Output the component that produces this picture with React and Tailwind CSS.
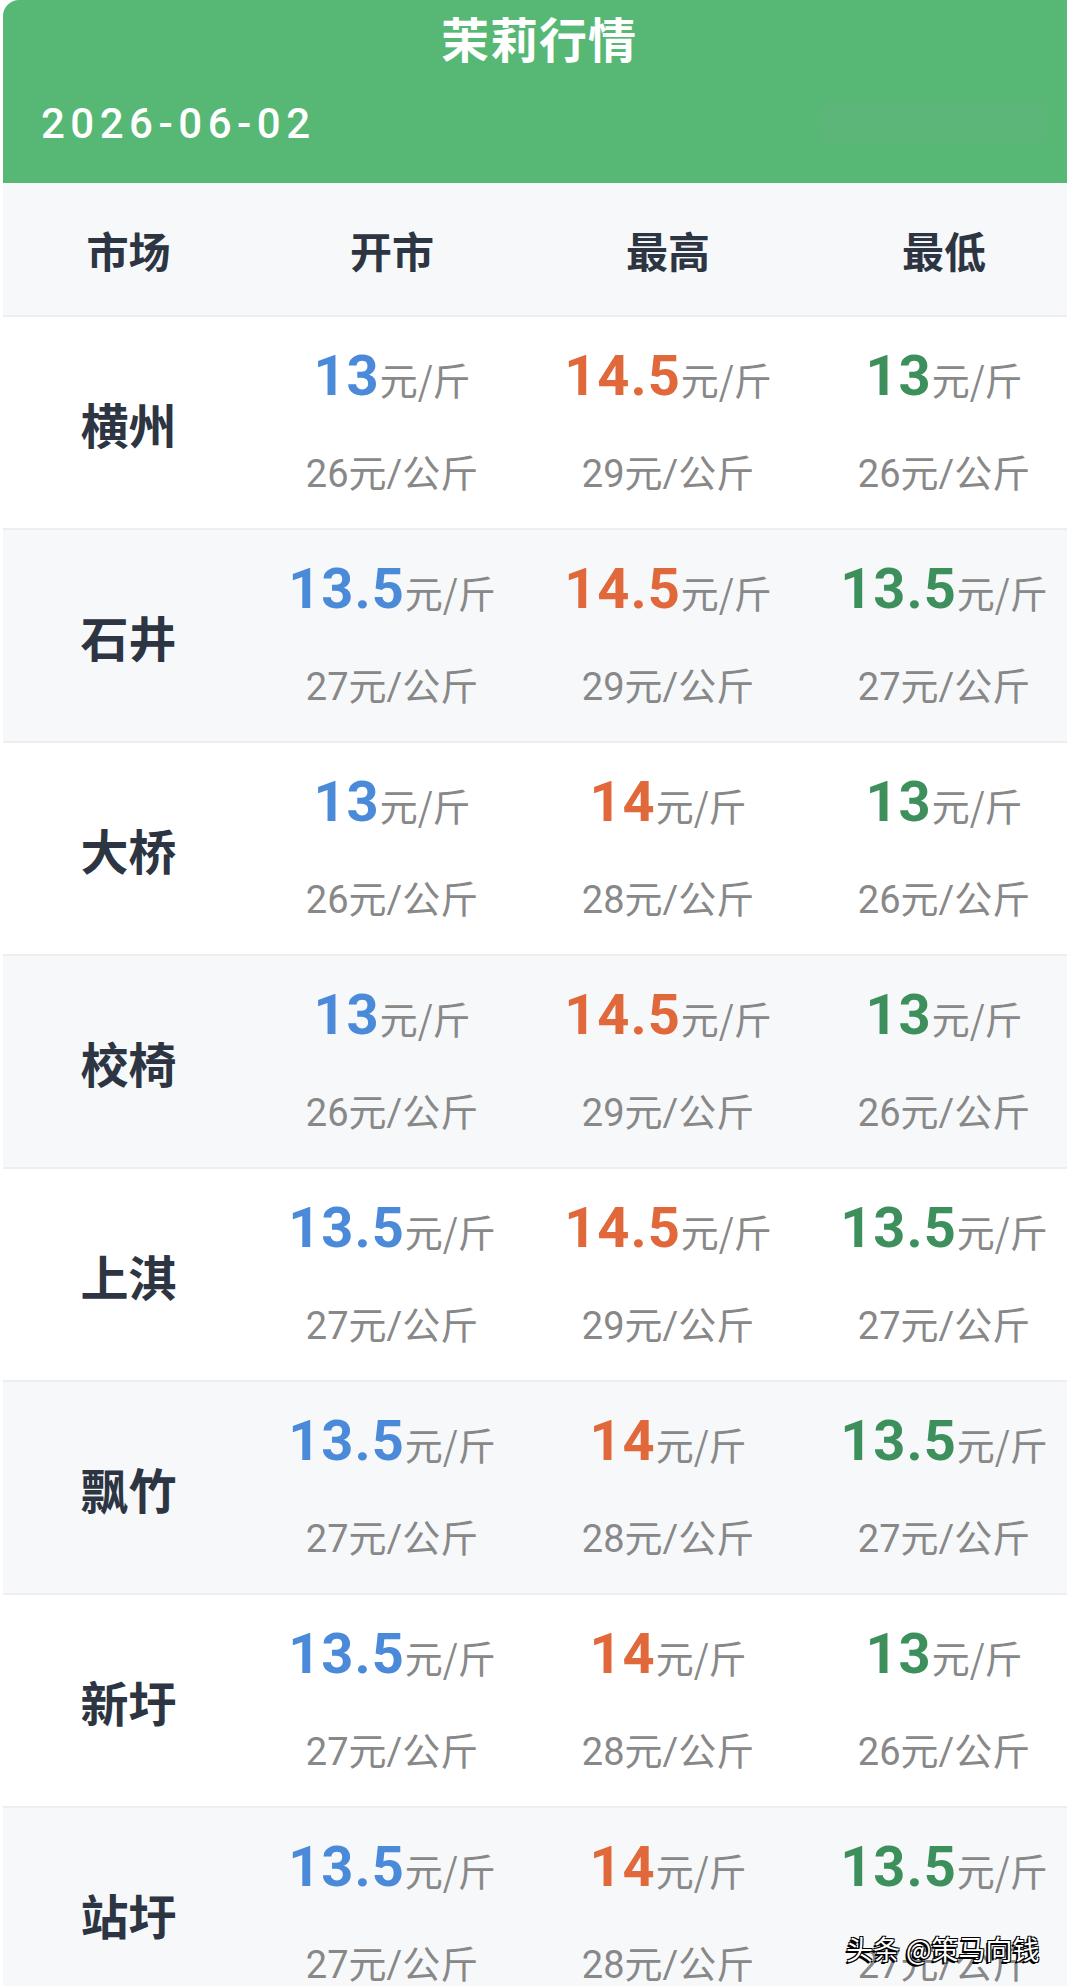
import React from "react";

const rows = [
  ["横州", "13", "14.5", "13", "26", "29", "26"],
  ["石井", "13.5", "14.5", "13.5", "27", "29", "27"],
  ["大桥", "13", "14", "13", "26", "28", "26"],
  ["校椅", "13", "14.5", "13", "26", "29", "26"],
  ["上淇", "13.5", "14.5", "13.5", "27", "29", "27"],
  ["飘竹", "13.5", "14", "13.5", "27", "28", "27"],
  ["新圩", "13.5", "14", "13", "27", "28", "26"],
  ["站圩", "13.5", "14", "13.5", "27", "28", "27"],
];

const CJK = "font-['Noto_Sans_CJK_SC',sans-serif]";
const NUM = "font-['Roboto','Noto_Sans_CJK_SC',sans-serif]";

function PriceCell({ value, kg, color }) {
  return (
    <div className="flex flex-col items-center pt-[26px]">
      <div className="flex items-baseline leading-[66px] whitespace-nowrap">
        <span className={`${NUM} font-bold text-[56px] tracking-[1px] ${color}`}>{value}</span>
        <span className={`${CJK} text-[38px] text-[#888888]`}>元/斤</span>
      </div>
      <div className={`${NUM} mt-[37px] text-[38px] leading-[50px] text-[#888888] whitespace-nowrap`}>
        {kg}元/公斤
      </div>
    </div>
  );
}

export default function App() {
  return (
    <div className="relative w-[1067px] h-[1986px] overflow-hidden bg-white pl-[3px]">
      <div className="relative h-[183px] bg-[#56b874] rounded-tl-[16px] overflow-hidden">
        <div className={`${CJK} text-center text-white font-bold text-[48px] leading-[52px] pt-[11px] pl-[8px] tracking-[1px]`}>
          茉莉行情
        </div>
        <div className="font-['Roboto',sans-serif] font-medium text-white text-[42px] leading-[48px] mt-[37px] ml-[38px] tracking-[5.5px]">
          2026-06-02
        </div>
        <div className="absolute left-[815px] top-[100px] w-[230px] h-[45px] bg-[#62b37e] opacity-50 blur-[4px] rounded"></div>
      </div>
      <div className="w-[1079px]">
        <div className="grid grid-cols-[251px_276px_276px_276px] h-[134px] bg-[#f7f8fa] border-b-2 border-[#eceef1] items-center">
          {["市场", "开市", "最高", "最低"].map((t) => (
            <div key={t} className={`${CJK} text-center font-bold text-[42px] text-[#2d3542]`}>
              {t}
            </div>
          ))}
        </div>
        {rows.map((r, i) => (
          <div
            key={r[0]}
            className={`grid grid-cols-[251px_276px_276px_276px] h-[213px] border-b-2 border-[#eceef1] ${
              i % 2 === 1 ? "bg-[#f7f8fa]" : "bg-white"
            }`}
          >
            <div className={`${CJK} flex items-center justify-center font-bold text-[48px] text-[#2d3542]`}>
              {r[0]}
            </div>
            <PriceCell value={r[1]} kg={r[4]} color="text-[#4a8ad9]" />
            <PriceCell value={r[2]} kg={r[5]} color="text-[#e0683a]" />
            <PriceCell value={r[3]} kg={r[6]} color="text-[#3d8f5c]" />
          </div>
        ))}
      </div>
      <div
        className={`${CJK} absolute left-[846px] top-[1932px] text-[27px] leading-[34px] text-white whitespace-nowrap [text-shadow:-1px_1px_0_#000,1px_1px_0_#000,-1px_-1px_0_#000,1px_-1px_0_#000,-2px_2px_0_#000]`}
      >
        头条 @策马向钱
      </div>
    </div>
  );
}
